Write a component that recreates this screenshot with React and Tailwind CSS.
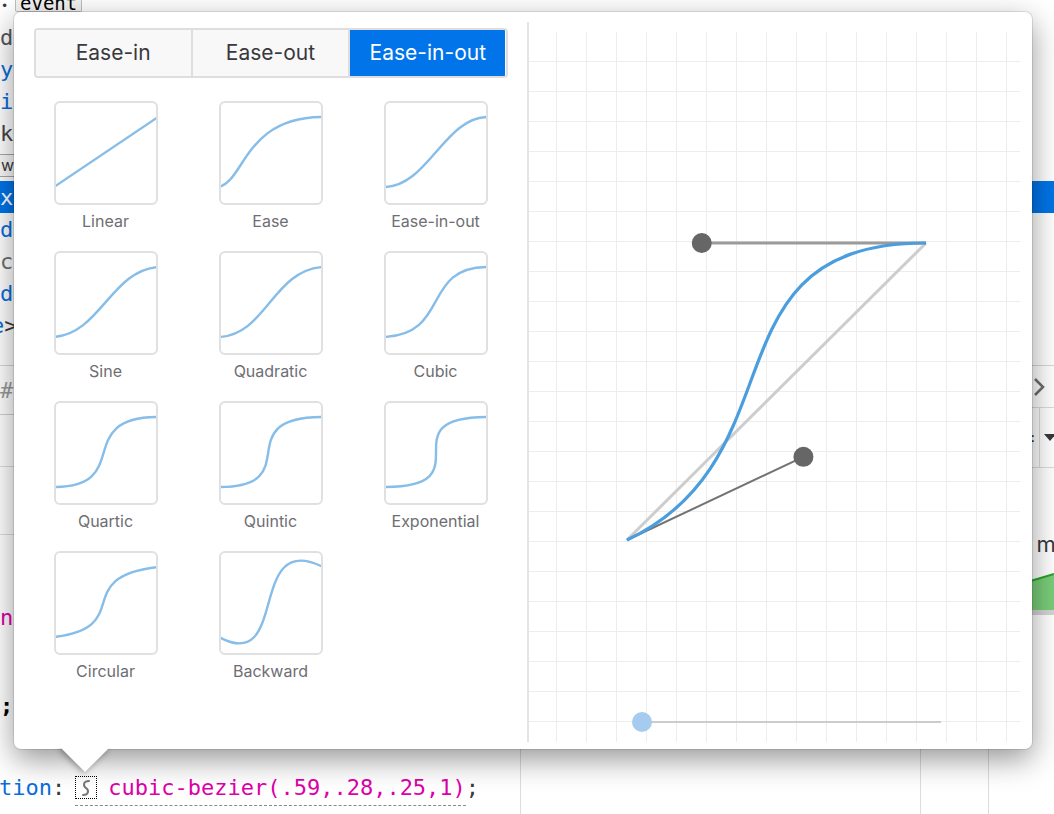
import React from "react";

const BLUE = "#0a6ddc";

const PRESETS = [
  ["Linear", [0, 0, 1, 1]],
  ["Ease", [0.25, 0.1, 0.25, 1]],
  ["Ease-in-out", [0.42, 0, 0.58, 1]],
  ["Sine", [0.445, 0.05, 0.55, 0.95]],
  ["Quadratic", [0.455, 0.03, 0.515, 0.955]],
  ["Cubic", [0.645, 0.045, 0.355, 1]],
  ["Quartic", [0.77, 0, 0.175, 1]],
  ["Quintic", [0.86, 0, 0.07, 1]],
  ["Exponential", [1, 0, 0, 1]],
  ["Circular", [0.785, 0.135, 0.15, 0.86]],
  ["Backward", [0.68, -0.55, 0.265, 1.55]],
];

function presetPath([x1, y1, x2, y2]) {
  const X = (v) => (v * 104).toFixed(2);
  const Y = (v) => (86 - v * 70).toFixed(2);
  return `M0,86 C${X(x1)},${Y(y1)} ${X(x2)},${Y(y2)} 104,16`;
}

function PresetCard({ name, p }) {
  return (
    <div className="flex flex-col items-center">
      <div className="relative w-[104px] h-[104px] rounded-[6px] border-2 border-[#e0e0e0] overflow-hidden bg-white">
        <svg width="100" height="100" viewBox="2 2 100 100" className="absolute left-0 top-0">
          <path d={presetPath(p)} fill="none" stroke="#86bde9" strokeWidth="2.4" />
        </svg>
      </div>
      <div className="mt-[6px] text-[16px] leading-[20px] text-[#6e6e73]">{name}</div>
    </div>
  );
}

function Graph() {
  const vs = Array.from({ length: 16 }, (_, k) => 27 + 30 * k);
  const hs = Array.from({ length: 23 }, (_, k) => 39 + 30 * k);
  const P0 = [98, 518];
  const P3 = [397, 221];
  const P1 = [98 + 0.59 * 299, 518 - 0.28 * 297];
  const P2 = [98 + 0.25 * 299, 221];
  return (
    <svg width="491" height="720" className="block">
      {vs.map((x) => (
        <line key={"v" + x} x1={x + 0.5} y1="10" x2={x + 0.5} y2="720" stroke="#ededed" strokeWidth="1" />
      ))}
      {hs.map((y) => (
        <line key={"h" + y} x1="0" y1={y + 0.5} x2="491" y2={y + 0.5} stroke="#ededed" strokeWidth="1" />
      ))}
      <line x1={P0[0]} y1={P0[1]} x2={P3[0]} y2={P3[1]} stroke="#cdcdcd" strokeWidth="3" />
      <line x1={P0[0]} y1={P0[1]} x2={P1[0]} y2={P1[1]} stroke="#737373" strokeWidth="2" />
      <line x1={P3[0]} y1={P3[1]} x2={P2[0]} y2={P2[1]} stroke="#9b9b9b" strokeWidth="3" />
      <path
        d={`M${P0[0]},${P0[1]} C${P1[0]},${P1[1]} ${P2[0]},${P2[1]} ${P3[0]},${P3[1]}`}
        fill="none"
        stroke="#4b9ede"
        strokeWidth="3.2"
      />
      <circle cx={P1[0]} cy={P1[1]} r="10" fill="#666666" />
      <circle cx={P2[0]} cy={P2[1]} r="10" fill="#666666" />
      <line x1="113" y1="700" x2="412" y2="700" stroke="#cccccc" strokeWidth="2" />
      <circle cx="113" cy="700" r="10" fill="#a5ccef" />
    </svg>
  );
}

function Popup() {
  const tabs = ["Ease-in", "Ease-out", "Ease-in-out"];
  return (
    <>
      <div className="absolute left-[14px] top-[12px] w-[1018px] h-[737px] z-10 flex rounded-[7px] bg-white shadow-[0_10px_30px_rgba(0,0,0,0.42),0_0_0_1px_rgba(0,0,0,0.10)] font-['Inter',sans-serif]">
        <div className="w-[513px] flex flex-col items-center pt-[16px]">
          <div className="w-[474px] h-[50px] flex border-2 border-[#dedede] rounded-[4px] overflow-hidden">
            {tabs.map((t, i) => (
              <div
                key={t}
                className={
                  i === 2
                    ? "flex-1 flex items-center justify-center bg-[#0074e8] text-white text-[21px] border-l-2 border-[#dedede]"
                    : i === 1
                    ? "flex-1 flex items-center justify-center bg-[#f8f8f8] text-[#38383d] text-[21px] border-l-2 border-[#dedede]"
                    : "flex-1 flex items-center justify-center bg-[#f8f8f8] text-[#38383d] text-[21px]"
                }
              >
                {t}
              </div>
            ))}
          </div>
          <div className="mt-[23px] grid grid-cols-[165px_165px_165px] gap-y-[20px] justify-center">
            {PRESETS.map(([n, p]) => (
              <PresetCard key={n} name={n} p={p} />
            ))}
          </div>
        </div>
        <div className="flex-1 pt-[10px] pb-[7px]">
          <div className="h-full border-l-2 border-[#e4e4e4]">
            <Graph />
          </div>
        </div>
      </div>
      <div className="absolute left-[45px] top-[748px] w-[80px] h-[34px] overflow-hidden z-20">
        <div className="ml-[23px] -mt-[17px] w-[34px] h-[34px] rotate-45 bg-white shadow-[0_2px_6px_rgba(0,0,0,0.35)]" />
      </div>
    </>
  );
}

function CodeRow({ parts, className = "" }) {
  return (
    <div className={"h-[32px] flex items-center whitespace-pre " + className}>
      {parts.map(([t, c, extra], i) => (
        <span key={i} className={extra || ""} style={{ color: c }}>
          {t}
        </span>
      ))}
    </div>
  );
}

function Swatch() {
  return (
    <span className="inline-flex items-center justify-center w-[22px] h-[23px] border-[1.5px] border-dotted border-black mr-[11px]">
      <svg width="12" height="18" viewBox="0 0 12 18">
        <path d="M9 2 C3 2, 3 7, 6 9 C9 11, 9 16, 3 16" fill="none" stroke="#777" strokeWidth="2" strokeLinecap="round" />
      </svg>
    </span>
  );
}

function Background() {
  return (
    <div className="flex flex-col h-full font-['DejaVu_Sans_Mono',monospace] text-[22px]">
      <div className="h-[366px] border-b border-[#d7d7db] flex flex-col">
        <div className="h-[12px] flex items-end">
          <span className="self-center w-[15px] pl-[1px] text-[12px] leading-[12px] text-[#38383d]">•</span>
          <span className="h-[17px] px-[4px] flex items-center border border-t-0 border-[#bdbdbd] bg-[#f2f2f2] text-[19px] leading-[16px] text-black rounded-b-[2px]">
            event
          </span>
        </div>
        <div className="pt-[9px] flex flex-col">
          <CodeRow parts={[["d:", "#55555c"]]} />
          <CodeRow parts={[["ys", BLUE]]} />
          <CodeRow parts={[["iv", BLUE]]} />
          <CodeRow parts={[["k", "#45454b"], ["i", BLUE]]} />
          <div className="h-[32px] flex items-center">
            <span className="h-[23px] flex items-center pl-[1px] pr-[6px] border border-l-0 border-[#a8a8a8] bg-[#fafafa] font-['Inter',sans-serif] text-[16px] text-[#38383d]">
              wh
            </span>
          </div>
          <CodeRow parts={[["xs", "#ffffff"]]} className="bg-[#0074e8]" />
          <CodeRow parts={[["d:", BLUE]]} />
          <CodeRow parts={[["cr", "#6f6f6f"]]} />
          <CodeRow parts={[["d'", BLUE]]} />
          <CodeRow parts={[["e", BLUE, "-ml-[9px]"], [">", "#38383d"]]} />
        </div>
      </div>
      <div className="flex-1 flex">
        <div className="w-[521px] border-r border-[#dcdcdc] flex flex-col">
          <div className="h-[49px] border-b border-[#d0d0d4] flex items-center text-[#9a9a9a]">#v</div>
          <div className="h-[52px] border-b border-[#dcdcdc]" />
          <div className="h-[68px] border-b border-[#dcdcdc]" />
          <CodeRow parts={[["n", "#dd00a9"]]} className="mt-[66px]" />
          <CodeRow parts={[[";", "#000000", "font-bold"]]} className="mt-[56px]" />
          <div className="mt-[50px] h-[32px] flex items-center whitespace-pre">
            <span className="-ml-[1px]" style={{ color: BLUE }}>tion</span>
            <span className="text-[#38383d] mr-[10px]">:</span>
            <span className="flex items-center border-b-[1.5px] border-dashed border-[#8a8a8a] pb-[1px] mt-[3px]">
              <Swatch />
              <span className="text-[#dd00a9]">cubic-bezier(.59,.28,.25,1)</span>
            </span>
            <span className="text-[#38383d]">;</span>
          </div>
        </div>
        <div className="flex-1 flex flex-col font-['Inter',sans-serif]">
          <div className="h-[42px] border-b border-[#dcdcdc] flex items-center justify-end pr-[8px]">
            <svg width="14" height="22" viewBox="0 0 14 22">
              <path d="M3 3 L11 11 L3 19" fill="none" stroke="#6e6e6e" strokeWidth="2.5" />
            </svg>
          </div>
          <div className="h-[60px] border-b border-[#dcdcdc] flex items-center justify-end">
            <span className="text-[22px] text-[#38383d] mr-[3px]">=</span>
            <span className="h-full border-l border-[#dcdcdc] mr-[4px]" />
            <svg width="12" height="8" viewBox="0 0 12 8" className="mr-[-2px]">
              <path d="M0 0 L12 0 L6 7 Z" fill="#38383d" />
            </svg>
          </div>
          <div className="h-[60px]" />
          <div className="h-[32px] flex items-center justify-end text-[22px] text-[#38383d] -mr-[8px]">m:</div>
          <div className="mt-[12px] h-[38px] flex justify-end bg-white">
            <svg width="40" height="38" viewBox="0 0 40 38">
              <polygon points="0,14 40,2 40,38 0,38" fill="#79cd79" />
              <polyline points="0,14 40,2" fill="none" stroke="#27a327" strokeWidth="2" />
            </svg>
          </div>
          <div className="h-[5px] bg-[#d4d4d4]" />
          <div className="flex-1 flex">
            <div className="w-[399px]" />
            <div className="w-[69px] border-l border-r border-[#dcdcdc]" />
          </div>
        </div>
      </div>
    </div>
  );
}

export default function App() {
  return (
    <div className="relative w-[1054px] h-[814px] overflow-hidden bg-white">
      <Background />
      <Popup />
    </div>
  );
}
